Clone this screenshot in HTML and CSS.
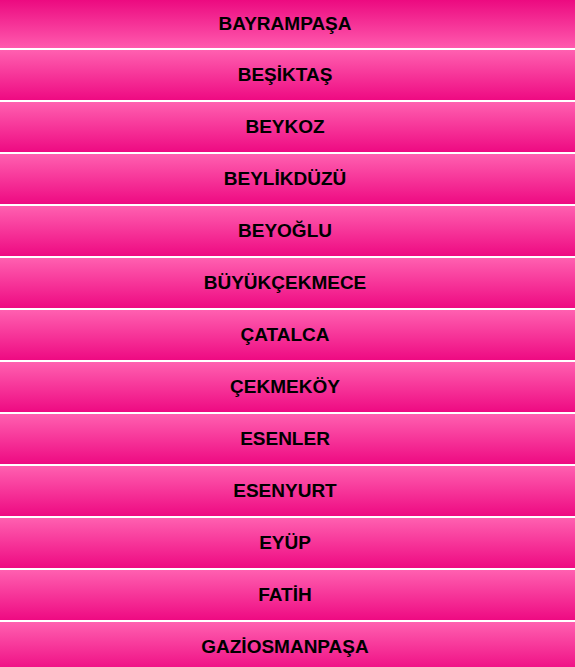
FILE: index.html
```html
<!DOCTYPE html>
<html lang="tr">
<head>
<meta charset="utf-8">
<title>İlçeler</title>
<link rel="stylesheet" href="styles.css">
</head>
<body>
<ul class="list">
  <li class="item item-active">BAYRAMPAŞA</li>
  <li class="item">BEŞİKTAŞ</li>
  <li class="item">BEYKOZ</li>
  <li class="item">BEYLİKDÜZÜ</li>
  <li class="item">BEYOĞLU</li>
  <li class="item">BÜYÜKÇEKMECE</li>
  <li class="item">ÇATALCA</li>
  <li class="item">ÇEKMEKÖY</li>
  <li class="item">ESENLER</li>
  <li class="item">ESENYURT</li>
  <li class="item">EYÜP</li>
  <li class="item">FATİH</li>
  <li class="item">GAZİOSMANPAŞA</li>
</ul>
</body>
</html>
```
FILE: styles.css
```css
html, body {
  margin: 0;
  padding: 0;
  background: #ffffff;
  overflow: hidden;
}
.list {
  list-style: none;
  margin: 0;
  padding: 0;
  display: flex;
  flex-direction: column;
  gap: 2px;
}
.item {
  height: 50px;
  padding-right: 5px;
  display: flex;
  align-items: center;
  justify-content: center;
  font-family: "Liberation Sans", Arial, sans-serif;
  font-weight: bold;
  font-size: 19px;
  color: #000000;
  background: linear-gradient(to bottom, #ff60b0 0%, #ee0a82 100%);
}
.item-active {
  height: 48px;
  background: linear-gradient(to bottom, #ec0a80 0%, #ff5aae 100%);
}
```
